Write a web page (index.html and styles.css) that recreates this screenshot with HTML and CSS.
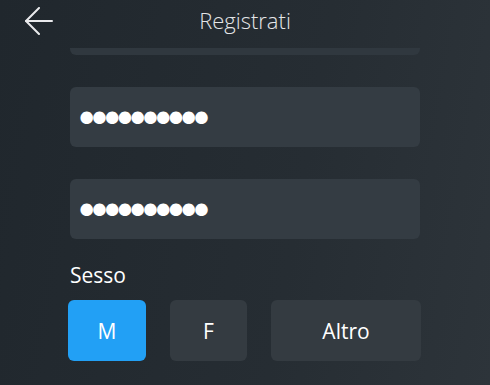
FILE: index.html
```html
<!DOCTYPE html>
<html lang="it">
<head>
  <meta charset="UTF-8">
  <meta name="viewport" content="width=device-width, initial-scale=1.0">
  <title>Registrati</title>
  <link rel="stylesheet" href="styles.css">
</head>
<body>
  <header class="topbar">
    <button type="button" class="back" aria-label="Indietro">
      <svg width="28" height="28" viewBox="0 0 28 28" fill="none" stroke="#e9eaec" stroke-width="2" stroke-linecap="round" stroke-linejoin="round">
        <path d="M27 14H1"/>
        <path d="M14 1L1 14l13 13"/>
      </svg>
    </button>
    <h1>Registrati</h1>
  </header>

  <form class="form">
    <div class="field clipped"></div>
    <input type="password" class="field" value="1234567890">
    <input type="password" class="field" value="1234567890">

    <div class="group">
      <label class="label">Sesso</label>
      <div class="choices">
        <button type="button" class="choice active">M</button>
        <button type="button" class="choice">F</button>
        <button type="button" class="choice">Altro</button>
      </div>
    </div>
  </form>
</body>
</html>
```

FILE: styles.css
```css
body {
  margin: 0;
  height: 385px;
  overflow: hidden;
  font-family: "Open Sans", sans-serif;
  color: #fff;
  background: linear-gradient(100deg, #20272d 0%, #262d33 60%, #2d343a 100%);
}
.topbar {
  height: 40px;
  display: flex;
  align-items: center;
  justify-content: center;
  position: relative;
}
.back {
  position: absolute;
  left: 25px;
  top: 7px;
  padding: 0;
  background: none;
  border: none;
  display: flex;
}
.topbar h1 {
  margin: 0;
  font-size: 22px;
  font-weight: 350;
  color: #e4e6e8;
}
.form {
  width: 350px;
  margin: 0 auto;
  padding-top: 8px;
  display: flex;
  flex-direction: column;
}
.field {
  box-sizing: border-box;
  width: 100%;
  height: 60px;
  margin-top: 32px;
  padding: 4px 4px 0;
  border: none;
  border-radius: 6px;
  background: #343c43;
  outline: none;
  color: #fff;
  font-family: "DejaVu Sans", sans-serif;
  font-size: 43px;
  letter-spacing: -12.6px;
}
.field.clipped {
  height: 7px;
  margin-top: 0;
  padding: 0;
  border-radius: 0 0 6px 6px;
  background: #30383f;
}
.group {
  margin-top: 22px;
}
.label {
  display: block;
  font-size: 21px;
  line-height: 28px;
  margin-bottom: 11px;
}
.choices {
  display: grid;
  grid-template-columns: 78px 77px 150px;
  column-gap: 24px;
  margin-left: -2px;
}
.choice {
  height: 61px;
  padding: 0;
  border: none;
  border-radius: 6px;
  background: #343b41;
  color: #fff;
  font-family: "Open Sans", sans-serif;
  font-size: 21px;
}
.choice.active {
  background: #22a0f5;
}
```
